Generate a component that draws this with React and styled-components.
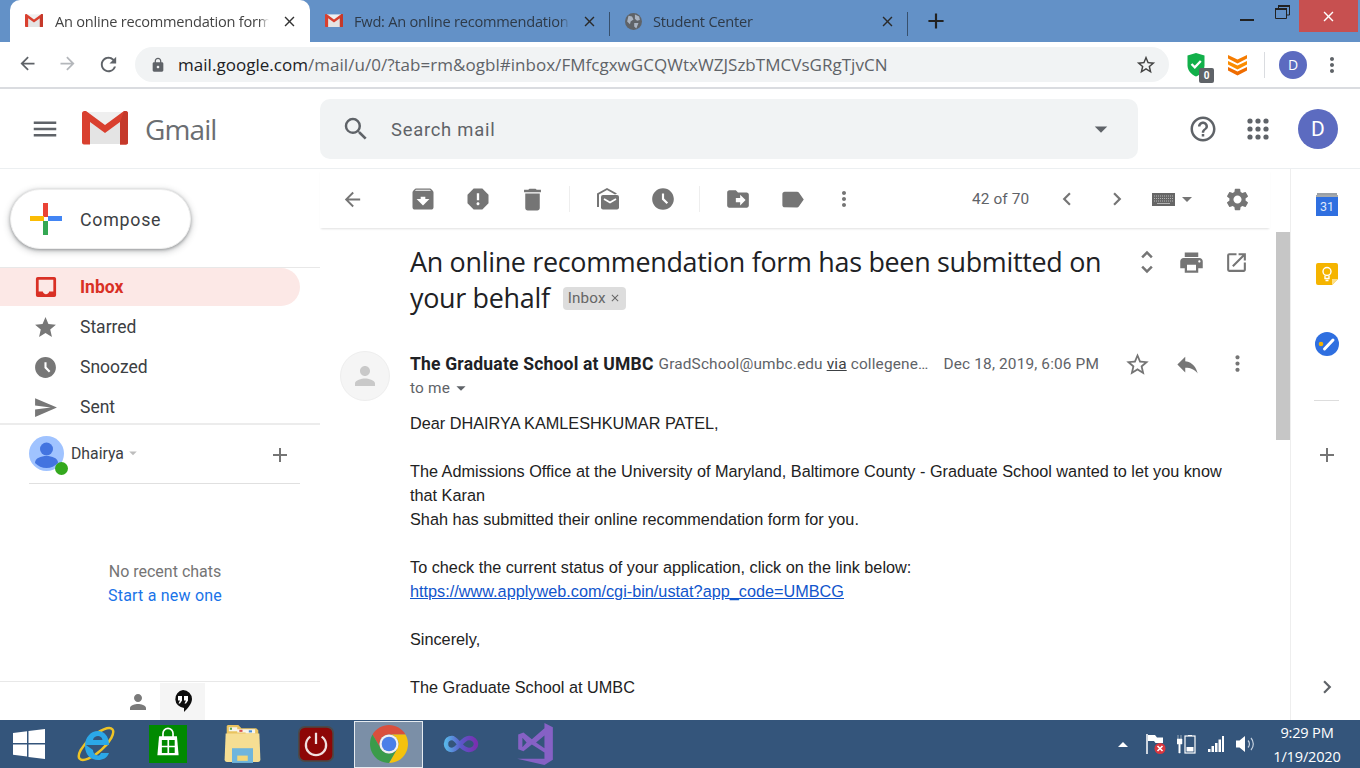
import React from "react";
import styled, { createGlobalStyle } from "styled-components";
import {
  MdAccessTimeFilled,
  MdAdd,
  MdArchive,
  MdArrowBack,
  MdArrowDropDown,
  MdArrowForward,
  MdChevronLeft,
  MdChevronRight,
  MdClose,
  MdDelete,
  MdDriveFileMove,
  MdHelpOutline,
  MdLabel,
  MdLock,
  MdMenu,
  MdMoreVert,
  MdOpenInNew,
  MdPerson,
  MdPrint,
  MdRefresh,
  MdReply,
  MdReport,
  MdSearch,
  MdSend,
  MdSettings,
  MdStar,
  MdStarBorder,
  MdUnfoldMore,
} from "react-icons/md";

const GlobalStyle = createGlobalStyle`
  html, body {
    margin: 0;
    padding: 0;
    width: 1360px;
    height: 768px;
    overflow: hidden;
    background: #fff;
    font-family: Roboto, "Liberation Sans", sans-serif;
  }
  * { box-sizing: border-box; }
`;

const Screen = styled.div`
  width: 1360px;
  height: 768px;
  display: flex;
  flex-direction: column;
  overflow: hidden;
`;

/* browser tabs */
const TabStrip = styled.div`
  height: 42px;
  flex: none;
  background: #6391c7;
  display: flex;
  padding-left: 10px;
`;

const Tab = styled.div`
  width: ${(p) => p.$width}px;
  height: 42px;
  flex: none;
  display: flex;
  align-items: center;
  padding: 0 ${(p) => (p.$active ? 12 : 11)}px 0 15px;
  gap: ${(p) => (p.$active ? 12 : 11)}px;
  background: ${(p) => (p.$active ? "#fff" : "transparent")};
  border-radius: ${(p) => (p.$active ? "10px 10px 0 0" : "0")};
  color: #3c4043;
`;

const TabTitle = styled.span`
  flex: 1;
  min-width: 0;
  white-space: nowrap;
  overflow: hidden;
  font: 14.6px "Open Sans", sans-serif;
  letter-spacing: -0.23px;
  color: ${(p) => (p.$active ? "#444" : "#2e3a48")};
  -webkit-mask-image: linear-gradient(to left, transparent 0, #000 10px);
  mask-image: linear-gradient(to left, transparent 0, #000 10px);
`;

const TabDivider = styled.div`
  width: 1px;
  height: 24px;
  margin-top: 12px;
  flex: none;
  background: #37506d;
`;

const NewTab = styled.div`
  width: 55px;
  height: 42px;
  flex: none;
  display: flex;
  align-items: center;
  justify-content: center;
  color: #222;
`;

const WindowControls = styled.div`
  margin-left: auto;
  display: flex;
  align-items: flex-start;
`;

const MinButton = styled.div`
  width: 14px;
  height: 2px;
  margin: 19px 21px 0 0;
  background: #222;
`;

const RestoreButton = styled.div`
  display: flex;
  margin: 5px 9px 0 0;
`;

const CloseButton = styled.div`
  width: 59px;
  height: 32px;
  margin-right: 2px;
  background: #c75050;
  color: #fff;
  display: flex;
  align-items: center;
  justify-content: center;
`;

/* address bar */
const AddressRow = styled.div`
  height: 47px;
  flex: none;
  display: flex;
  align-items: center;
  border-bottom: 2px solid #dadce0;
`;

const NavIcon = styled.div`
  width: 40.5px;
  flex: none;
  display: flex;
  justify-content: center;
  color: ${(p) => p.$color || "#5f6368"};
`;

const NavIcons = styled.div`
  display: flex;
  padding-left: 7px;
  width: 135px;
  flex: none;
`;

const Omnibox = styled.div`
  width: 1034px;
  height: 35px;
  flex: none;
  border-radius: 18px;
  background: #f1f3f4;
  display: flex;
  align-items: center;
  padding: 0 12px 0 15px;
  color: #5f6368;
`;

const Url = styled.div`
  flex: 1;
  margin-left: 12px;
  font: 17px "Open Sans", sans-serif;
  letter-spacing: 0.03px;
  color: #5f6368;
  white-space: nowrap;
  b {
    font-weight: 400;
    color: #202124;
  }
`;

const Extensions = styled.div`
  flex: 1;
  display: flex;
  align-items: center;
  padding-left: 17px;
`;

const ShieldWrap = styled.div`
  position: relative;
  width: 20px;
  height: 26px;
  flex: none;
  margin-right: 21px;
`;

const ShieldBadge = styled.span`
  position: absolute;
  left: 13px;
  top: 16px;
  width: 15px;
  height: 15px;
  border-radius: 2px;
  background: #5f6368;
  color: #fff;
  font: bold 10px/15px Roboto, sans-serif;
  text-align: center;
`;

const ToolbarRule = styled.div`
  width: 1px;
  height: 26px;
  background: #dadce0;
  margin: 0 14px 0 ${(p) => p.$left || 16}px;
  flex: none;
`;

const SmallAvatar = styled.div`
  width: 28px;
  height: 28px;
  flex: none;
  border-radius: 50%;
  background: #5c6bc0;
  color: #fff;
  font: 14px/28px "Open Sans", sans-serif;
  text-align: center;
`;

const ChromeMenu = styled.div`
  margin-left: 13px;
  color: #5f6368;
  display: flex;
`;

/* gmail header */
const MailHeader = styled.header`
  height: 80px;
  flex: none;
  display: flex;
  align-items: center;
  border-bottom: 1px solid #eceff1;
`;

const Brand = styled.div`
  width: 320px;
  flex: none;
  display: flex;
  align-items: center;
  padding-left: 30px;
  color: #5f6368;
`;

const BrandName = styled.span`
  margin-left: 17px;
  font: 400 28px "Open Sans", sans-serif;
  letter-spacing: -0.9px;
  color: #6b6e72;
`;

const LogoBox = styled.span`
  display: flex;
  margin-left: 22px;
`;

const SearchBox = styled.div`
  width: 818px;
  height: 60px;
  flex: none;
  border-radius: 10px;
  background: #f1f3f4;
  display: flex;
  align-items: center;
  padding: 0 22px 0 21px;
  color: #5f6368;
`;

const SearchText = styled.span`
  flex: 1;
  margin-left: 20px;
  padding-top: 1px;
  font: 18.4px Roboto, sans-serif;
  letter-spacing: 0.75px;
  color: #5f6368;
`;

const HeaderActions = styled.div`
  flex: 1;
  display: flex;
  align-items: center;
  padding-left: 50px;
  color: #5f6368;
`;

const HeaderIcon = styled.div`
  width: 55px;
  flex: none;
  display: flex;
  color: #5f6368;
`;

const BigAvatar = styled.div`
  width: 40px;
  height: 40px;
  flex: none;
  border-radius: 50%;
  background: #5c6bc0;
  color: #fff;
  font: 21px/40px Roboto, sans-serif;
  text-align: center;
`;

/* three columns */
const Columns = styled.div`
  flex: 1;
  min-height: 0;
  display: flex;
`;

const Sidebar = styled.aside`
  width: 320px;
  flex: none;
  display: flex;
  flex-direction: column;
`;

const ComposeArea = styled.div`
  height: 99px;
  flex: none;
  padding: 20px 0 0 10px;
  border-bottom: 1px solid #e8e8e8;
`;

const ComposeButton = styled.div`
  width: 181px;
  height: 60px;
  border-radius: 30px;
  background: #fff;
  border: 1px solid #eee;
  box-shadow: 0 1px 3px rgba(60, 64, 67, 0.4), 0 2px 6px 1px rgba(60, 64, 67, 0.25);
  display: flex;
  align-items: center;
  padding-left: 19px;
  gap: 18px;
  font: 400 17.8px Roboto, sans-serif;
  letter-spacing: 0.75px;
  color: #3c4043;
`;

const NavList = styled.nav`
  height: 157px;
  flex: none;
  padding-right: 20px;
  border-bottom: 2px solid #ececec;
`;

const NavRow = styled.div`
  height: ${(p) => (p.$active ? 38 : 40)}px;
  margin-bottom: ${(p) => (p.$active ? 1 : 0)}px;
  display: flex;
  align-items: center;
  padding-left: 33px;
  gap: 22px;
  border-radius: 0 20px 20px 0;
  background: ${(p) => (p.$active ? "#fce8e6" : "transparent")};
  color: ${(p) => (p.$active ? "#d93025" : "#777")};
  span {
    font: ${(p) => (p.$active ? "700" : "400")} 17.5px Roboto, sans-serif;
    color: ${(p) => (p.$active ? "#d93025" : "#3c4043")};
  }
`;

const InboxSvg = styled.svg`
  flex: none;
  margin: 0 1px 0 2px;
`;

const ChatHead = styled.div`
  height: 59px;
  margin: 0 20px 0 29px;
  flex: none;
  display: flex;
  align-items: center;
  border-bottom: 1px solid #e0e0e0;
  color: #3c4043;
`;

const AvatarWrap = styled.div`
  position: relative;
  width: 35px;
  height: 35px;
  flex: none;
  margin-top: -2px;
`;

const OnlineDot = styled.i`
  position: absolute;
  left: 26px;
  top: 26px;
  width: 13px;
  height: 13px;
  border-radius: 50%;
  background: #34a81e;
`;

const ChatName = styled.span`
  margin: -2px 0 0 7px;
  font: 15.8px Roboto, sans-serif;
  color: #3c4043;
`;

const ChatCaret = styled.span`
  display: flex;
  margin-top: -2px;
  color: #bdbdbd;
`;

const ChatAdd = styled.span`
  margin-left: auto;
  margin-top: 1px;
  display: flex;
  color: #757575;
  margin-right: 8px;
`;

const NoChats = styled.div`
  flex: 1;
  padding: 76px 0 0 10px;
  text-align: center;
  font: 16px/24px Roboto, sans-serif;
  color: #757575;
  a {
    display: block;
    color: #1a73e8;
    font-size: 16px;
    letter-spacing: 0.2px;
  }
`;

const SideFooter = styled.div`
  height: 39px;
  flex: none;
  border-top: 1px solid #e8e8e8;
  display: flex;
  justify-content: center;
  padding-top: 1px;
`;

const FootTab = styled.div`
  width: 45px;
  display: flex;
  align-items: center;
  justify-content: center;
  background: ${(p) => (p.$on ? "#f5f5f5" : "transparent")};
  color: #7a7a7a;
`;

const Reading = styled.main`
  flex: 1;
  min-width: 0;
  display: flex;
  flex-direction: column;
`;

const ActionBar = styled.div`
  height: 59px;
  flex: none;
  margin-right: 20px;
  display: flex;
  align-items: center;
  padding: 0 8px 0 5px;
  box-shadow: 0 2px 2px -1px rgba(0, 0, 0, 0.12);
  color: #757575;
`;

const ActionIcon = styled.div`
  width: ${(p) => p.$w || 55}px;
  height: 30px;
  flex: none;
  display: flex;
  align-items: center;
  justify-content: center;
  margin: 1px 0 0 ${(p) => p.$ml || 0}px;
  color: #757575;
  svg {
    flex: none;
  }
`;

const ActionRule = styled.div`
  width: 1px;
  height: 26px;
  flex: none;
  margin: 0 10px 0 9px;
  background: #eeeeee;
`;

const Pager = styled.span`
  margin-left: auto;
  width: 58px;
  font: 15.4px Roboto, sans-serif;
  letter-spacing: 0.1px;
  color: #5f6368;
  white-space: nowrap;
`;

const ThreadRow = styled.div`
  flex: 1;
  min-height: 0;
  display: flex;
  padding-top: 4px;
`;

const Thread = styled.div`
  flex: 1;
  min-width: 0;
  overflow: hidden;
`;

const Scrollbar = styled.div`
  width: 14px;
  flex: none;
  background: #fff;
`;

const ScrollThumb = styled.div`
  height: 208px;
  background: #c6c6c6;
`;

const SubjectRow = styled.div`
  display: flex;
  padding: 12px 0 0 90px;
  height: 119px;
`;

const Subject = styled.h1`
  width: 700px;
  flex: none;
  margin: 0;
  display: flex;
  flex-wrap: wrap;
  align-content: flex-start;
  align-items: center;
  font: 400 26.9px/36px "Open Sans", sans-serif;
  letter-spacing: -0.3px;
  color: #202124;
`;

const InboxChip = styled.span`
  display: inline-flex;
  align-items: center;
  height: 23px;
  margin-left: 13px;
  padding: 0 5px 0 5px;
  gap: 3px;
  border-radius: 4px;
  background: #dddddd;
  font: 15.2px Roboto, sans-serif;
  letter-spacing: 0.2px;
  color: #666;
`;

const SubjectTools = styled.div`
  display: flex;
  margin-left: 14px;
  height: 36px;
  color: #757575;
`;

const ToolSlot = styled.div`
  width: 45px;
  flex: none;
  display: flex;
  align-items: center;
  justify-content: center;
  color: #757575;
`;

const Message = styled.div`
  display: flex;
  padding-left: 20px;
`;

const Avatar = styled.div`
  width: 50px;
  height: 50px;
  flex: none;
  border-radius: 50%;
  border: 1px solid #eee;
  background: #f5f5f5;
  display: flex;
  align-items: center;
  justify-content: center;
  color: #c9c9c9;
`;

const MessageMain = styled.div`
  flex: 1;
  min-width: 0;
  padding-left: 20px;
`;

const MetaRow = styled.div`
  display: flex;
  align-items: center;
  height: 24px;
  margin-top: 1px;
  white-space: nowrap;
`;

const Sender = styled.b`
  font: 700 17.5px Roboto, sans-serif;
  letter-spacing: 0.2px;
  color: #202124;
`;

const SenderMail = styled.span`
  margin-left: 5px;
  width: 271px;
  flex: none;
  font: 15.4px Roboto, sans-serif;
  letter-spacing: 0.15px;
  color: #5f6368;
  u { color: #3c4043; }
`;

const SentDate = styled.span`
  margin-left: 14px;
  width: 156px;
  flex: none;
  font: 15.4px Roboto, sans-serif;
  letter-spacing: 0.15px;
  color: #5f6368;
`;

const MetaIcons = styled.div`
  display: flex;
  margin-left: 13px;
  color: #757575;
`;

const MetaIcon = styled.div`
  width: 50px;
  flex: none;
  display: flex;
  justify-content: center;
  color: #757575;
`;

const ToMe = styled.div`
  display: flex;
  align-items: center;
  height: 24px;
  font: 15.4px Roboto, sans-serif;
  color: #5f6368;
  letter-spacing: 0.2px;
`;

const Body = styled.div`
  margin-top: 11px;
  width: 830px;
  font: 16.25px/24px "Liberation Sans", Arial, sans-serif;
  color: #222;
  a {
    color: #1155cc;
  }
`;

const AppPanel = styled.aside`
  width: 70px;
  flex: none;
  border-left: 1px solid #eeeeee;
  display: flex;
  flex-direction: column;
  align-items: center;
  padding: 23px 0 0 2px;
  color: #757575;
`;

const PanelApp = styled.div`
  height: 70px;
  flex: none;
  display: flex;
  justify-content: center;
`;

const PanelRule = styled.div`
  width: 25px;
  height: 1px;
  flex: none;
  margin: -2px 0 42px;
  background: #dddddd;
`;

const PanelBottom = styled.div`
  margin-top: auto;
  height: 46px;
  display: flex;
  color: #5f6368;
`;

/* windows taskbar */
const Taskbar = styled.footer`
  height: 48px;
  flex: none;
  background: #34557b;
  display: flex;
  align-items: center;
  color: #fff;
`;

const StartSlot = styled.div`
  width: 60px;
  height: 48px;
  flex: none;
  display: flex;
  align-items: center;
  justify-content: center;
  padding-right: 2px;
`;

const TaskSlot = styled.div`
  width: ${(p) => p.$w}px;
  height: 48px;
  flex: none;
  display: flex;
  align-items: center;
  justify-content: center;
`;

const ActiveSlot = styled.div`
  width: 69px;
  height: 47px;
  flex: none;
  margin: 0 2px;
  display: flex;
  align-items: center;
  justify-content: center;
  background: #7b8fa7;
  border: 1px solid #e6ebf0;
`;

const Tray = styled.div`
  margin-left: auto;
  display: flex;
  align-items: center;
  height: 48px;
`;

const TraySlot = styled.div`
  width: ${(p) => p.$w || 30}px;
  flex: none;
  display: flex;
  justify-content: center;
`;

const Clock = styled.div`
  width: 88px;
  margin: 0 9px 0 2px;
  text-align: center;
  font: 14.6px/24px "Open Sans", sans-serif;
  letter-spacing: -0.2px;
  color: #fff;
`;

/* drawings */
const GmailMark = ({ size = 16 }) => (
  <svg width={size} height={size * 0.74} viewBox="0 0 46 34">
    <path d="M3 1h40v32H3z" fill="#efefef" />
    <path d="M8 11l15 11 15-11v22H8z" fill="#e4e4e4" />
    <path
      d="M0 2.500v29Q0 33.500 2 33.500h6V11l15 11 15-11v22.500h6q2 0 2-2v-29Q46 0 43.500 0H42L23 14 4 0H2.500Q0 0 0 2.500z"
      fill="#d9402f"
    />
    <path d="M38 11v22.500h6q2 0 2-2v-29Q46 0 43.500 0H42z" fill="#c5392a" />
  </svg>
);

const Globe = () => (
  <svg width="17" height="17" viewBox="0 0 24 24">
    <circle cx="12" cy="12" r="12" fill="#5f6368" />
    <path
      d="M5 4l5 1 2 4-4 3-1 4-4-4zM14 2l6 3 1 5-4 1-3-3zM13 14l6 0-3 8-3-3z"
      fill="#aab4c2"
    />
  </svg>
);

const RestoreGlyph = () => (
  <svg width="15" height="14" viewBox="0 0 15 14">
    <path d="M3.500 3V.5h11v9.500H11.500" fill="none" stroke="#222" />
    <path d="M3 0h12v2H3z" fill="#222" />
    <path d="M.5 3.500h11v10H.5z" fill="none" stroke="#222" />
    <path d="M0 3h12v2H0z" fill="#222" />
  </svg>
);

const Shield = () => (
  <svg width="20" height="26" viewBox="0 0 20 26">
    <path d="M10 1l8.500 2.500v10c0 5-4 9-8.500 11-4.500-2-8.500-6-8.500-11v-10z" fill="#12b04a" />
    <path d="M5.500 12l3.300 3.300 6-6.300" fill="none" stroke="#fff" strokeWidth="2.300" />
  </svg>
);

const Chevrons = () => (
  <svg width="21" height="22" viewBox="0 0 21 22">
    <path d="M1 1l9.500 4.500L20 1v3.500L10.500 9.500 1 4.500z" fill="#f57c00" />
    <path d="M1 7l9.500 4.500L20 7v3.500L10.500 15.500 1 10.500z" fill="#fb8c00" />
    <path d="M1 13l9.500 4.500L20 13v3.500l-9.500 5-9.500-5z" fill="#ef6c00" />
  </svg>
);

const AppDots = () => (
  <svg width="30" height="30" viewBox="0 0 30 30">
    {[7, 15, 23].map((y) =>
      [7, 15, 23].map((x) => <circle key={`${x}-${y}`} cx={x} cy={y} r="2.600" fill="#5f6368" />)
    )}
  </svg>
);

const InboxGlyph = () => (
  <InboxSvg width="22" height="22" viewBox="0 0 24 24">
    <path
      fill="#d93025"
      fillRule="evenodd"
      d="M3 1h18a2 2 0 0 1 2 2v18a2 2 0 0 1-2 2H3a2 2 0 0 1-2-2V3a2 2 0 0 1 2-2zm1 3v13h4.500c.5 2 2 3 3.500 3s3-1 3.500-3H20V4z"
    />
  </InboxSvg>
);

const MarkUnread = () => (
  <svg width="24" height="24" viewBox="0 0 24 24">
    <path d="M1 6.500L11 1l10 5.500-2 1-8-4.500-8 4.500V20H1z" fill="#757575" />
    <rect x="5" y="8" width="18" height="14.500" rx="2" fill="#757575" />
    <path d="M8 12l6 3.500 6-3.500" fill="none" stroke="#fff" strokeWidth="1.800" />
  </svg>
);

const KeyboardGlyph = () => (
  <svg width="23" height="13" viewBox="0 0 23 13">
    <rect width="23" height="13" fill="#666" />
    <path d="M2 3h19M2 5.500h19M2 8h19" stroke="#b5b5b5" strokeWidth="1" strokeDasharray="1 1" />
    <path d="M5 10.500h13" stroke="#b5b5b5" strokeWidth="1" />
  </svg>
);

const ComposePlus = () => (
  <svg width="32" height="32" viewBox="0 0 32 32">
    <path d="M13 0h5v14h-5z" fill="#ea4335" />
    <path d="M18 13h14v5H18z" fill="#4285f4" />
    <path d="M13 18h5v14h-5z" fill="#34a853" />
    <path d="M0 13h14v5H0z" fill="#fbbc05" />
  </svg>
);

const ChatPerson = () => (
  <svg width="35" height="35" viewBox="0 0 35 35">
    <circle cx="17.500" cy="17.500" r="17.500" fill="#a0c3ff" />
    <circle cx="17.500" cy="13" r="6.500" fill="#4374e0" />
    <path d="M6 27c0-5 6-7 11.500-7S29 22 29 27c-3 3-7 5-11.500 5S9 30 6 27z" fill="#4374e0" />
  </svg>
);

const Hangouts = () => (
  <svg width="18" height="24" viewBox="0 0 18 24">
    <path d="M9 0a9 9 0 0 1 9 9c0 5-5 10-8 13v-4.100A9 9 0 0 1 9 0z" fill="#0d0d0d" />
    <path d="M4 6h4v4.500L6 13.500H4.500L6 10.500H4zM10 6h4v4.500l-2 3h-1.500l1.500-3h-2z" fill="#fff" />
  </svg>
);

const CalendarApp = () => (
  <svg width="24" height="24" viewBox="0 0 24 24">
    <path d="M2 1h20v5H2z" fill="#9aa0a6" />
    <path d="M1 3h22v21H1z" fill="#2f6fe0" />
    <path d="M1 3h22v2H1z" fill="#a5a9ad" />
    <text x="12" y="19" textAnchor="middle" fontSize="12.500" fontFamily="Roboto, sans-serif" fill="#dfe8fb">
      31
    </text>
  </svg>
);

const KeepApp = () => (
  <svg width="24" height="24" viewBox="0 0 24 24">
    <path d="M3 1h18a2 2 0 0 1 2 2v14l-6 6H3a2 2 0 0 1-2-2V3a2 2 0 0 1 2-2z" fill="#f5b400" />
    <path d="M23 17h-6v6z" fill="#fbe08a" />
    <circle cx="12" cy="9.500" r="4" fill="none" stroke="#fff" strokeWidth="1.400" />
    <path d="M10 13.500v3h4v-3M10.500 18.500h3" fill="none" stroke="#fff" strokeWidth="1.400" />
  </svg>
);

const TasksApp = () => (
  <svg width="24" height="24" viewBox="0 0 24 24">
    <circle cx="12" cy="12" r="12" fill="#2f6fe0" />
    <circle cx="6" cy="12" r="2.300" fill="#f5b400" />
    <path d="M9.500 17l8.500-9" stroke="#fff" strokeWidth="3" strokeLinecap="round" />
  </svg>
);

const WindowsLogo = () => (
  <svg width="32" height="34" viewBox="0 0 32 34">
    <path d="M0 6l14-1.700V16H0zM15.500 4L32 2v14H15.500zM0 17.500h14v12L0 27.800zM15.500 17.500H32V32l-16.500-2.100z" fill="#fff" />
  </svg>
);

const IeLogo = () => (
  <svg width="38" height="38" viewBox="0 0 38 38">
    <ellipse cx="19" cy="19" rx="22" ry="8" transform="rotate(-42 19 19)" fill="none" stroke="#eec326" strokeWidth="2.500" />
    <path
      d="M9 20h23c0-9-5-14-11-14-7 0-13 6-13 15s6 14 13 14c5 0 9-2 11-7h-8c-1 2-2 2.500-3 2.500-3 0-5-3-5-5.500zM16 15c.5-3 3-4 5-4s4 1 4.500 4z"
      fill="#2ba8e8"
      fillRule="evenodd"
    />
  </svg>
);

const StoreLogo = () => (
  <svg width="38" height="38" viewBox="0 0 34 34">
    <path d="M0 0h34v34H0z" fill="#008a00" />
    <path d="M9 10h16l1.500 17h-19z" fill="#fff" />
    <path d="M12.500 11V7.500a4.500 4.500 0 0 1 9 0V11" fill="none" stroke="#fff" strokeWidth="1.500" />
    <path d="M11.500 13.500h5v5h-5zM18 13.500h5v5h-5zM11.500 20h5v5h-5zM18 20h5v5h-5z" fill="#008a00" />
  </svg>
);

const FolderLogo = () => (
  <svg width="39" height="40" viewBox="0 0 34 38">
    <path d="M3 1h10l3 3h14l2 2v12H2V2z" fill="#e9c35f" />
    <path d="M4 3h8v4H4zM12 5h8v3h-8zM20 5h9v4h-9z" fill="#f7f5ea" />
    <path d="M5 3.500h2v2H5z" fill="#5aa845" />
    <path d="M14 5.500h3v2h-3z" fill="#d9534f" />
    <path d="M23 6h3v2h-3z" fill="#4a90d9" />
    <path d="M1 9h32l1 25q0 2-2 2H2q-2 0-2-2z" fill="#f6de93" />
    <path d="M7 23h20v14H7z" fill="#6fb5dc" />
    <path d="M12 30h10v5H12z" fill="#f4d777" />
  </svg>
);

const PowerLogo = () => (
  <svg width="36" height="36" viewBox="0 0 32 32">
    <rect width="32" height="32" rx="6" fill="#4a4a4a" />
    <rect x="1.500" y="1.500" width="29" height="29" rx="5" fill="#8d0606" />
    <path d="M11 9.500a9 9 0 1 0 10 0" fill="none" stroke="#f0e0e0" strokeWidth="2" />
    <path d="M16 6v10" stroke="#f0e0e0" strokeWidth="2" />
  </svg>
);

const ChromeLogo = () => (
  <svg width="38" height="40" viewBox="2 1 44 46">
    <path d="M4.950 13A22 22 0 0 1 43.050 13H24A11 11 0 0 0 14.470 29.500Z" fill="#d94f3d" />
    <path d="M43.050 13A22 22 0 0 1 24 46L33.530 29.500A11 11 0 0 0 24 13Z" fill="#f4c20d" />
    <path d="M24 46A22 22 0 0 1 4.950 13L14.470 29.500A11 11 0 0 0 33.530 29.500Z" fill="#3b9b4a" />
    <circle cx="24" cy="24" r="11" fill="#f1f1f1" />
    <circle cx="24" cy="24" r="8.500" fill="#4a7fe8" />
  </svg>
);

const InfinityLogo = () => (
  <svg width="38" height="22" viewBox="0 0 36 22">
    <defs>
      <linearGradient id="inf" x1="0" x2="1">
        <stop offset="0" stopColor="#58b4e8" />
        <stop offset="0.5" stopColor="#5a58c8" />
        <stop offset="1" stopColor="#7a2fb0" />
      </linearGradient>
    </defs>
    <path
      d="M3 11c0-4 3-6 6-6 5 0 9 12 17 12 4 0 7-3 7-6s-3-6-7-6c-7 0-11 12-17 12-3 0-6-2-6-6z"
      fill="none"
      stroke="url(#inf)"
      strokeWidth="4.500"
    />
  </svg>
);

const VsLogo = () => (
  <svg width="38" height="42" viewBox="0 0 34 40">
    <path
      fill="#8661c5"
      fillRule="evenodd"
      d="M26 0l8 4v31l-8 5L0 34h26V28L14 20.500 6 27 1 25V11l5-2 8 6.500L26 5zM26 12l-8 6.500 8 5.500zM5 14v9l4-4.500z"
    />
  </svg>
);

const TrayFlag = () => (
  <svg width="20" height="22" viewBox="0 0 20 22">
    <path d="M1 1v20" stroke="#fff" strokeWidth="1.500" />
    <path d="M2 2h7l2 2.500h6V10H9.500L8 8H2z" fill="#fff" />
    <circle cx="14" cy="15.500" r="5.500" fill="#d9363e" />
    <path d="M11.500 13l5 5M16.500 13l-5 5" stroke="#fff" strokeWidth="1.600" />
  </svg>
);

const TrayPower = () => (
  <svg width="19" height="20" viewBox="0 0 19 20">
    <path d="M1 1v4M4 1v4M0 5h5v5H3.200v9H1.800v-9H0z" fill="#fff" stroke="#fff" strokeWidth="0.500" />
    <rect x="8" y="2" width="10" height="17" fill="none" stroke="#fff" strokeWidth="1.200" />
    <path d="M11 1h4v1h-4zM9.500 13h7v4.500h-7z" fill="#fff" />
  </svg>
);

const TraySignal = () => (
  <svg width="16" height="16" viewBox="0 0 16 16">
    <path d="M0 13h2.500v3H0zM3.500 10H6v6H3.500zM7 7h2.500v9H7zM10.500 3.500H13V16h-2.500zM14 0h2v16h-2z" fill="#fff" />
  </svg>
);

const TrayVolume = () => (
  <svg width="20" height="20" viewBox="0 0 20 20">
    <path d="M0 6.500h3.500L9 2v16l-5.500-4.500H0z" fill="#fff" />
    <path d="M12 6.500a5 5 0 0 1 0 7M15 4a9 9 0 0 1 0 12" fill="none" stroke="#c6d2e0" strokeWidth="1.200" />
  </svg>
);

const TrayCaret = () => (
  <svg width="10" height="5" viewBox="0 0 10 5">
    <path d="M0 5l5-5 5 5z" fill="#fff" />
  </svg>
);

const App = () => {
  return (
    <Screen>
      <GlobalStyle />
      <TabStrip>
        <Tab $active $width={300}>
          <GmailMark size={18} />
          <TabTitle $active>An online recommendation form</TabTitle>
          <MdClose size={17} color="#333" />
        </Tab>
        <Tab $width={299}>
          <GmailMark size={18} />
          <TabTitle>Fwd: An online recommendation</TabTitle>
          <MdClose size={17} color="#2a2a2a" />
        </Tab>
        <TabDivider />
        <Tab $width={297}>
          <Globe />
          <TabTitle>Student Center</TabTitle>
          <MdClose size={17} color="#2a2a2a" />
        </Tab>
        <TabDivider />
        <NewTab>
          <MdAdd size={26} />
        </NewTab>
        <WindowControls>
          <MinButton />
          <RestoreButton>
            <RestoreGlyph />
          </RestoreButton>
          <CloseButton>
            <MdClose size={17} />
          </CloseButton>
        </WindowControls>
      </TabStrip>

      <AddressRow>
        <NavIcons>
          <NavIcon>
            <MdArrowBack size={21} />
          </NavIcon>
          <NavIcon $color="#b4b7bb">
            <MdArrowForward size={21} />
          </NavIcon>
          <NavIcon>
            <MdRefresh size={23} />
          </NavIcon>
        </NavIcons>
        <Omnibox>
          <MdLock size={16} />
          <Url>
            <b>mail.google.com</b>/mail/u/0/?tab=rm&amp;ogbl#inbox/FMfcgxwGCQWtxWZJSzbTMCVsGRgTjvCN
          </Url>
          <MdStarBorder size={22} color="#444" />
        </Omnibox>
        <Extensions>
          <ShieldWrap>
            <Shield />
            <ShieldBadge>0</ShieldBadge>
          </ShieldWrap>
          <Chevrons />
          <ToolbarRule $left={16} />
          <SmallAvatar>D</SmallAvatar>
          <ChromeMenu>
            <MdMoreVert size={24} />
          </ChromeMenu>
        </Extensions>
      </AddressRow>

      <MailHeader>
        <Brand>
          <MdMenu size={30} />
          <LogoBox>
            <GmailMark size={46} />
          </LogoBox>
          <BrandName>Gmail</BrandName>
        </Brand>
        <SearchBox>
          <MdSearch size={30} />
          <SearchText>Search mail</SearchText>
          <MdArrowDropDown size={30} />
        </SearchBox>
        <HeaderActions>
          <HeaderIcon>
            <MdHelpOutline size={30} />
          </HeaderIcon>
          <HeaderIcon>
            <AppDots />
          </HeaderIcon>
          <BigAvatar>D</BigAvatar>
        </HeaderActions>
      </MailHeader>

      <Columns>
        <Sidebar>
          <ComposeArea>
            <ComposeButton>
              <ComposePlus />
              Compose
            </ComposeButton>
          </ComposeArea>
          <NavList>
            <NavRow $active>
              <InboxGlyph />
              <span>Inbox</span>
            </NavRow>
            <NavRow>
              <MdStar size={25} />
              <span>Starred</span>
            </NavRow>
            <NavRow>
              <MdAccessTimeFilled size={25} />
              <span>Snoozed</span>
            </NavRow>
            <NavRow>
              <MdSend size={25} />
              <span>Sent</span>
            </NavRow>
          </NavList>
          <ChatHead>
            <AvatarWrap>
              <ChatPerson />
              <OnlineDot />
            </AvatarWrap>
            <ChatName>Dhairya</ChatName>
            <ChatCaret>
              <MdArrowDropDown size={18} />
            </ChatCaret>
            <ChatAdd>
              <MdAdd size={24} />
            </ChatAdd>
          </ChatHead>
          <NoChats>
            No recent chats
            <a>Start a new one</a>
          </NoChats>
          <SideFooter>
            <FootTab>
              <MdPerson size={24} />
            </FootTab>
            <FootTab $on>
              <Hangouts />
            </FootTab>
          </SideFooter>
        </Sidebar>

        <Reading>
          <ActionBar>
            <ActionIcon>
              <MdArrowBack size={23} />
            </ActionIcon>
            <ActionIcon $ml={15}>
              <MdArchive size={28} />
            </ActionIcon>
            <ActionIcon>
              <MdReport size={28} />
            </ActionIcon>
            <ActionIcon>
              <MdDelete size={29} />
            </ActionIcon>
            <ActionRule />
            <ActionIcon>
              <MarkUnread />
            </ActionIcon>
            <ActionIcon>
              <MdAccessTimeFilled size={26} />
            </ActionIcon>
            <ActionRule />
            <ActionIcon>
              <MdDriveFileMove size={26} />
            </ActionIcon>
            <ActionIcon>
              <MdLabel size={27} />
            </ActionIcon>
            <ActionIcon $w={47}>
              <MdMoreVert size={24} />
            </ActionIcon>
            <Pager>42 of 70</Pager>
            <ActionIcon $w={50} $ml={12}>
              <MdChevronLeft size={26} />
            </ActionIcon>
            <ActionIcon $w={50}>
              <MdChevronRight size={26} />
            </ActionIcon>
            <ActionIcon $w={35} $ml={4}>
              <KeyboardGlyph />
            </ActionIcon>
            <ActionIcon $w={14} $ml={-1}>
              <MdArrowDropDown size={24} />
            </ActionIcon>
            <ActionIcon $w={50} $ml={18}>
              <MdSettings size={27} />
            </ActionIcon>
          </ActionBar>
          <ThreadRow>
            <Thread>
              <SubjectRow>
                <Subject>
                  <span>An online recommendation form has been submitted on</span>
                  <span>your behalf</span>
                  <InboxChip>
                    Inbox
                    <MdClose size={12} />
                  </InboxChip>
                </Subject>
                <SubjectTools>
                  <ToolSlot>
                    <MdUnfoldMore size={30} />
                  </ToolSlot>
                  <ToolSlot>
                    <MdPrint size={27} />
                  </ToolSlot>
                  <ToolSlot>
                    <MdOpenInNew size={25} />
                  </ToolSlot>
                </SubjectTools>
              </SubjectRow>
              <Message>
                <Avatar>
                  <MdPerson size={30} />
                </Avatar>
                <MessageMain>
                  <MetaRow>
                    <Sender>The Graduate School at UMBC</Sender>
                    <SenderMail>
                      GradSchool@umbc.edu <u>via</u> collegene…
                    </SenderMail>
                    <SentDate>Dec 18, 2019, 6:06 PM</SentDate>
                    <MetaIcons>
                      <MetaIcon>
                        <MdStarBorder size={27} />
                      </MetaIcon>
                      <MetaIcon>
                        <MdReply size={27} />
                      </MetaIcon>
                      <MetaIcon>
                        <MdMoreVert size={25} />
                      </MetaIcon>
                    </MetaIcons>
                  </MetaRow>
                  <ToMe>
                    to me
                    <MdArrowDropDown size={22} />
                  </ToMe>
                  <Body>
                    Dear DHAIRYA KAMLESHKUMAR PATEL,
                    <br />
                    <br />
                    The Admissions Office at the University of Maryland, Baltimore County - Graduate School wanted to let you know
                    <br />
                    that Karan
                    <br />
                    Shah has submitted their online recommendation form for you.
                    <br />
                    <br />
                    To check the current status of your application, click on the link below:
                    <br />
                    <a href="#status">https://www.applyweb.com/cgi-bin/ustat?app_code=UMBCG</a>
                    <br />
                    <br />
                    Sincerely,
                    <br />
                    <br />
                    The Graduate School at UMBC
                  </Body>
                </MessageMain>
              </Message>
            </Thread>
            <Scrollbar>
              <ScrollThumb />
            </Scrollbar>
          </ThreadRow>
        </Reading>

        <AppPanel>
          <PanelApp>
            <CalendarApp />
          </PanelApp>
          <PanelApp>
            <KeepApp />
          </PanelApp>
          <PanelApp>
            <TasksApp />
          </PanelApp>
          <PanelRule />
          <MdAdd size={24} />
          <PanelBottom>
            <MdChevronRight size={26} />
          </PanelBottom>
        </AppPanel>
      </Columns>

      <Taskbar>
        <StartSlot>
          <WindowsLogo />
        </StartSlot>
        <TaskSlot $w={72}>
          <IeLogo />
        </TaskSlot>
        <TaskSlot $w={72}>
          <StoreLogo />
        </TaskSlot>
        <TaskSlot $w={76}>
          <FolderLogo />
        </TaskSlot>
        <TaskSlot $w={72}>
          <PowerLogo />
        </TaskSlot>
        <ActiveSlot>
          <ChromeLogo />
        </ActiveSlot>
        <TaskSlot $w={72}>
          <InfinityLogo />
        </TaskSlot>
        <TaskSlot $w={76}>
          <VsLogo />
        </TaskSlot>
        <Tray>
          <TraySlot $w={36}>
            <TrayCaret />
          </TraySlot>
          <TraySlot>
            <TrayFlag />
          </TraySlot>
          <TraySlot>
            <TrayPower />
          </TraySlot>
          <TraySlot>
            <TraySignal />
          </TraySlot>
          <TraySlot>
            <TrayVolume />
          </TraySlot>
          <Clock>
            9:29 PM
            <br />
            1/19/2020
          </Clock>
        </Tray>
      </Taskbar>
    </Screen>
  );
};

export default App;
